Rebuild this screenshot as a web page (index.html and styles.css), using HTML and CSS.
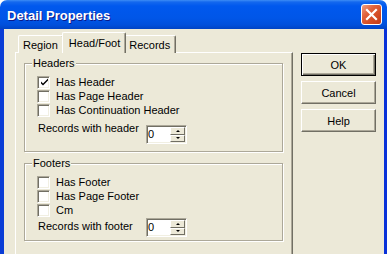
FILE: index.html
```html
<!DOCTYPE html>
<html>
	<head>
		<meta charset="UTF-8">
		<title>Detail Properties</title>
		<link rel="stylesheet" href="styles.css">
	</head>
	<body>
		<div class="window">
			<div class="titlebar">
				<span class="title">Detail Properties</span>
				<span class="close">
					<svg width="21" height="21" viewBox="0 0 21 21"><path d="M6 6 L15 15 M15 6 L6 15" stroke="#fff" stroke-width="2.2" stroke-linecap="square"/></svg>
				</span>
			</div>
			<div class="frame">
				<div class="tabctl">
					<div class="tabstrip">
						<div class="tab">Region</div>
						<div class="tab active">Head/Foot</div>
						<div class="tab">Records</div>
					</div>
					<div class="panel">
						<!-- headers -->
						<fieldset class="group">
							<legend>Headers</legend>
							<div class="group-body">
								<div class="check"><span class="box"><svg width="9" height="9" viewBox="0 0 9 9"><path d="M1 3.5 L3 5.5 L8 0.5 L8 2.5 L3 7.5 L1 5.5 Z" fill="#000"/></svg></span>Has Header</div>
								<div class="check"><span class="box"></span>Has Page Header</div>
								<div class="check"><span class="box"></span>Has Continuation Header</div>
								<div class="spin-row head-row">
									<span class="spin-label">Records with header</span>
									<span class="spin"><span class="spin-val">0</span><span class="spin-btns"><span class="up"></span><span class="down"></span></span></span>
								</div>
							</div>
						</fieldset>
						<!-- footers -->
						<fieldset class="group foot">
							<legend>Footers</legend>
							<div class="group-body">
								<div class="check"><span class="box"></span>Has Footer</div>
								<div class="check"><span class="box"></span>Has Page Footer</div>
								<div class="check"><span class="box"></span>Cm</div>
								<div class="spin-row foot-row">
									<span class="spin-label">Records with footer</span>
									<span class="spin"><span class="spin-val">0</span><span class="spin-btns"><span class="up"></span><span class="down"></span></span></span>
								</div>
							</div>
						</fieldset>
					</div>
				</div>
				<div class="buttons">
					<button class="btn default">OK</button>
					<button class="btn">Cancel</button>
					<button class="btn">Help</button>
				</div>
			</div>
		</div>
	</body>
</html>
```

FILE: styles.css
```css
body{
	margin: 0;
	background: #fff;
	overflow: hidden;
	font-family: "Liberation Sans", Arial, sans-serif;
	font-size: 11px;
	color: #000;
}
.window{
	width: 387px;
	height: 270px;
	border-radius: 7px 7px 0 0;
	overflow: hidden;
	display: flex;
	flex-direction: column;
}
.titlebar{
	height: 29px;
	flex: none;
	display: flex;
	align-items: center;
	justify-content: space-between;
	padding: 1px 5px 0 7px;
	box-sizing: border-box;
	background: linear-gradient(#3d8df5 0, #1468ee 2px, #0058ee 6px, #0056e8 18px, #004fdb 25px, #0043c4 29px);
}
.title{
	color: #fff;
	font-weight: bold;
	font-size: 13px;
	text-shadow: 1px 1px 0 #0a1a8a;
}
.close{
	width: 21px;
	height: 21px;
	box-sizing: border-box;
	border: 1px solid #fff;
	border-radius: 3px;
	margin-top: -1px;
	background: linear-gradient(135deg, #f0a083 0, #e0623c 35%, #d24a22 70%, #c23b1a 100%);
	display: flex;
	align-items: center;
	justify-content: center;
}
.close svg{
	display: block;
	margin: -1px;
}
.frame{
	flex: 1;
	display: flex;
	background: #ece9d8;
	border-left: 4px solid #0a3dd6;
	border-right: 3px solid #0831d9;
	padding: 3px 0 0 11px;
}
.tabctl{
	width: 278px;
	display: flex;
	flex-direction: column;
}
.tabstrip{
	display: flex;
	height: 20px;
	padding-left: 3px;
	position: relative;
	z-index: 1;
}
.tab{
	margin-top: 3px;
	height: 18px;
	box-sizing: border-box;
	padding: 3px 5px 0 4px;
	border-top: 1px solid #fff;
	border-left: 1px solid #fff;
	border-right: 1px solid #716f64;
	box-shadow: inset -1px 0 #aca899;
	border-radius: 2px 2px 0 0;
	background: #ece9d8;
}
.tab.active{
	margin: 0 -2px;
	height: 21px;
	padding: 4px 5px 0 6px;
	position: relative;
	z-index: 2;
}
.panel{
	flex: 1;
	box-sizing: border-box;
	border-top: 1px solid #fff;
	border-left: 1px solid #fff;
	border-right: 1px solid #716f64;
	box-shadow: inset -1px 0 #aca899;
	padding: 4px 0 0 8px;
}
.group{
	width: 259px;
	box-sizing: border-box;
	margin: 0;
	padding: 0;
	min-width: 0;
	border: 1px solid #aca899;
	box-shadow: 1px 1px 0 #fff, inset 1px 1px 0 #fff;
}
.group.foot{
	margin-top: 5px;
}
legend{
	margin-left: 7px;
	padding: 0 1px;
	line-height: 13px;
	background: #ece9d8;
}
.group-body{
	padding: 5px 0 7px 12px;
}
.group.foot .group-body{
	padding-bottom: 3px;
}
.check{
	height: 14px;
	display: flex;
	align-items: center;
}
.box{
	width: 13px;
	height: 13px;
	box-sizing: border-box;
	margin-right: 6px;
	background: #fff;
	border: 1px solid;
	border-color: #aca899 #fff #fff #aca899;
	box-shadow: inset 1px 1px #716f64, inset -1px -1px #f1efe2;
	display: flex;
	align-items: center;
	justify-content: center;
}
.box svg{
	display: block;
	margin: 1px 0 0 1px;
}
.spin-row{
	display: flex;
	align-items: flex-start;
	line-height: 13px;
}
.head-row{
	margin-top: 5px;
}
.head-row .spin{
	margin-top: 3px;
}
.foot-row{
	margin-top: 1px;
}
.foot-row .spin-label{
	margin-top: 2px;
}
.spin-label{
	width: 108px;
	padding-left: 1px;
}
.spin{
	width: 41px;
	height: 19px;
	box-sizing: border-box;
	display: flex;
	background: #fff;
	border: 1px solid;
	border-color: #aca899 #fff #fff #aca899;
	box-shadow: inset 1px 1px #716f64, inset -1px -1px #f1efe2;
	padding: 1px;
}
.spin-val{
	flex: 1;
	line-height: 15px;
}
.spin-btns{
	width: 15px;
	display: flex;
	flex-direction: column;
}
.up, .down{
	flex: 1;
	box-sizing: border-box;
	background: #ece9d8;
	border: 1px solid;
	border-color: #fff #716f64 #716f64 #fff;
	display: flex;
	align-items: center;
	justify-content: center;
}
.up::after{
	content: "";
	border: 2px solid transparent;
	border-bottom-color: #000;
	border-top: 0;
}
.down::after{
	content: "";
	border: 2px solid transparent;
	border-top-color: #000;
	border-bottom: 0;
}
.buttons{
	margin: 21px 0 0 8px;
	display: flex;
	flex-direction: column;
	gap: 5px;
}
.btn{
	width: 75px;
	height: 23px;
	margin: 0;
	padding: 0;
	font: inherit;
	color: #000;
	background: #ece9d8;
	border: 1px solid;
	border-color: #fff #716f64 #716f64 #fff;
	box-shadow: inset -1px -1px #aca899;
	border-radius: 0;
}
.btn.default{
	border-color: #000;
	box-shadow: inset 1px 1px #fff, inset -1px -1px #716f64, inset -2px -2px #aca899;
}
```
